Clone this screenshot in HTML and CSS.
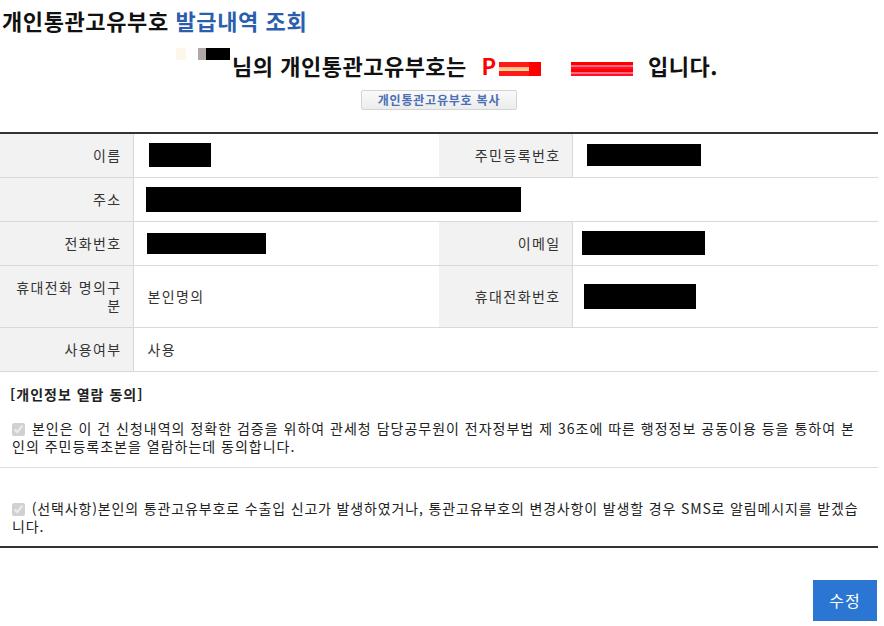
FILE: index.html
```html
<!DOCTYPE html>
<html lang="ko">
<head>
    <meta charset="UTF-8">
    <title>개인통관고유부호 발급내역 조회</title>
    <link rel="stylesheet" href="styles.css">
</head>
<body>
    <div class="container">
        <h1 class="page-title">개인통관고유부호 <span class="accent">발급내역 조회</span></h1>

        <div class="result">
            <p class="result-line">
                <span class="name-mask"><i class="m1"></i><i class="m2"></i><i class="m3"></i></span>님의 개인통관고유부호는
                <span class="code">P<i class="r1"></i><i class="r2"></i></span>
                <span class="code code-2"><i class="r3"></i></span>
                입니다.
            </p>
            <button class="copy-btn" type="button">개인통관고유부호 복사</button>
        </div>

        <table class="info-table">
            <colgroup>
                <col class="col-label">
                <col class="col-value">
                <col class="col-label">
                <col class="col-value">
            </colgroup>
            <tr class="row">
                <th>이름</th>
                <td><span class="mask mask-name"></span></td>
                <th>주민등록번호</th>
                <td><span class="mask mask-rrn"></span></td>
            </tr>
            <tr class="row">
                <th>주소</th>
                <td colspan="3"><span class="mask mask-addr"></span></td>
            </tr>
            <tr class="row">
                <th>전화번호</th>
                <td><span class="mask mask-tel"></span></td>
                <th>이메일</th>
                <td><span class="mask mask-mail"></span></td>
            </tr>
            <tr class="row row-tall">
                <th>휴대전화 명의구분</th>
                <td>본인명의</td>
                <th>휴대전화번호</th>
                <td><span class="mask mask-mobile"></span></td>
            </tr>
            <tr class="row">
                <th>사용여부</th>
                <td>사용</td>
                <th class="empty"></th>
                <td class="empty"></td>
            </tr>
        </table>

        <section class="agree">
            <h2>[개인정보 열람 동의]</h2>
            <label class="agree-item">
                <input type="checkbox" checked disabled>
                본인은 이 건 신청내역의 정확한 검증을 위하여 관세청 담당공무원이 전자정부법 제 36조에 따른 행정정보 공동이용 등을 통하여 본인의 주민등록초본을 열람하는데 동의합니다.
            </label>
            <label class="agree-item last">
                <input type="checkbox" checked disabled>
                (선택사항)본인의 통관고유부호로 수출입 신고가 발생하였거나, 통관고유부호의 변경사항이 발생할 경우 SMS로 알림메시지를 받겠습니다.
            </label>
        </section>

        <div class="actions">
            <button class="submit-btn" type="button">수정</button>
        </div>
    </div>
</body>
</html>
```

FILE: styles.css
```css
* {
    margin: 0;
    padding: 0;
    box-sizing: border-box;
}

body {
    font-family: "Noto Sans CJK KR", "Noto Sans", sans-serif;
    color: #222;
    background: #fff;
}

.container {
    width: 878px;
}

.page-title {
    font-size: 22px;
    font-weight: 700;
    line-height: 40px;
    padding-left: 2px;
    color: #111;
    letter-spacing: 0.6px;
}

.page-title .accent {
    color: #2b5fad;
}

/* result */
.result {
    text-align: center;
    padding-top: 4px;
}

.result-line {
    font-size: 22px;
    font-weight: 700;
    line-height: 42px;
    color: #111;
    letter-spacing: 0.5px;
    padding-left: 16px;
}

.name-mask {
    display: inline-block;
    width: 56px;
    height: 30px;
    vertical-align: top;
    position: relative;
    top: 2px;
}

.name-mask i {
    position: absolute;
    top: 2px;
    height: 12px;
}

.name-mask .m1 { left: 0; width: 10px; background: #fdf6ea; }
.name-mask .m2 { left: 22px; width: 8px; background: #b0a8a4; }
.name-mask .m3 { left: 30px; width: 24px; background: #000; }

.code {
    display: inline-block;
    color: #f00;
    margin-left: 8px;
}

.code i {
    display: inline-block;
    vertical-align: middle;
    height: 14px;
}

.code .r1 {
    width: 30px;
    margin-left: 2px;
    background: linear-gradient(#ff1a1a 0, #ff1a1a 35%, #ffb080 35%, #ffe6a0 65%, #ff1a1a 65%);
}

.code .r2 {
    width: 12px;
    background: #ff0000;
}

.code-2 {
    margin-left: 24px;
    margin-right: 8px;
}

.code-2 .r3 {
    width: 62px;
    background: repeating-linear-gradient(#ff0000 0, #ff0000 3px, #ff6a80 3px, #ff6a80 5px, #ff1030 5px, #ff1030 7px);
}

.copy-btn {
    font-family: inherit;
    font-size: 12px;
    font-weight: 700;
    color: #4a6fb5;
    letter-spacing: 0.8px;
    width: 156px;
    height: 20px;
    line-height: 18px;
    margin-top: 3px;
    border: 1px solid #d4d4d4;
    border-radius: 2px;
    background: linear-gradient(#fafafa, #ececec);
}

/* table */
.info-table {
    width: 878px;
    margin-top: 22px;
    border-collapse: collapse;
    border-top: 2px solid #333;
    font-size: 14px;
    letter-spacing: 1.4px;
    color: #333;
}

.col-label { width: 133px; }
.col-value { width: 306px; }

.info-table th,
.info-table td {
    height: 44px;
    border-bottom: 1px solid #d9d9d9;
    vertical-align: middle;
}

.info-table th {
    background: #f2f2f2;
    font-weight: 400;
    text-align: right;
    padding: 0 11px 0 10px;
    border-right: 1px solid #d9d9d9;
    line-height: 18px;
}

.info-table td {
    padding: 0 14px;
}

.info-table th.empty,
.info-table td.empty {
    background: #fff;
    border-right: 0;
}

.row-tall th,
.row-tall td {
    height: 62px;
}

.mask {
    display: block;
    background: #000;
}

.mask-name { width: 62px; height: 24px; margin-left: 1px; }
.mask-rrn { width: 114px; height: 22px; }
.mask-addr { width: 375px; height: 25px; margin-left: -2px; }
.mask-tel { width: 119px; height: 21px; margin-left: -1px; }
.mask-mail { width: 123px; height: 24px; margin-left: -5px; }
.mask-mobile { width: 112px; height: 25px; margin-left: -3px; }

/* agreement */
.agree {
    border-bottom: 2px solid #333;
    font-size: 14px;
    color: #222;
}

.agree h2 {
    font-size: 14px;
    font-weight: 700;
    letter-spacing: 1px;
    padding: 12px 0 0 10px;
    line-height: 20px;
}

.agree-item {
    display: block;
    line-height: 18px;
    padding: 15px 12px 12px 12px;
    border-bottom: 1px solid #ddd;
    letter-spacing: 1px;
}

.agree-item.last {
    padding-top: 31px;
    padding-bottom: 11px;
    border-bottom: 0;
    letter-spacing: 0.85px;
}

.agree-item input {
    width: 13px;
    height: 13px;
    vertical-align: -2px;
    margin-right: 2px;
}

.actions {
    display: flex;
    justify-content: flex-end;
    padding-top: 32px;
}

.submit-btn {
    font-family: inherit;
    width: 64px;
    height: 41px;
    background: #2a76d2;
    color: #fff;
    font-size: 16px;
    letter-spacing: 1px;
    border: 0;
    margin-right: 1px;
}
```
